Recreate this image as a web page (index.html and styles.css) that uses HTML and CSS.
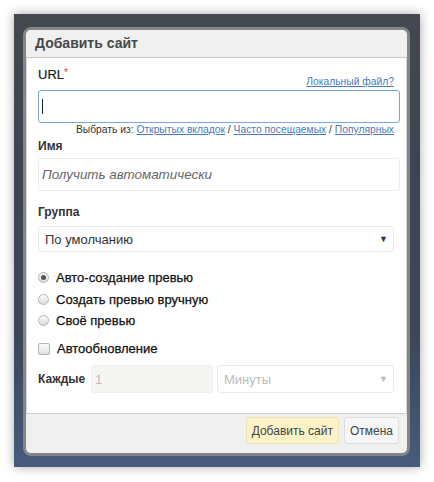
FILE: index.html
```html
<!DOCTYPE html>
<html lang="ru">
<head>
    <meta charset="UTF-8">
    <title>Добавить сайт</title>
    <link rel="stylesheet" href="styles.css">
</head>
<body>
    <div class="backdrop">
        <div class="dialog">
            <div class="dialog-head">Добавить сайт</div>

            <form class="dialog-body">
                <div class="url-row">
                    <label class="label-plain" for="url">URL<span class="req">*</span></label>
                    <a href="#" class="link local-link">Локальный файл?</a>
                </div>
                <div class="field url-field"><span class="caret"></span></div>
                <div class="pick-from">
                    Выбрать из: <a href="#" class="link">Открытых вкладок</a> / <a href="#" class="link">Часто посещаемых</a> / <a href="#" class="link">Популярных</a>
                </div>

                <div class="label name-label">Имя</div>
                <div class="field name-field">Получить автоматически</div>

                <div class="label group-label">Группа</div>
                <div class="field select">По умолчанию<span class="arrow">&#9660;</span></div>

                <div class="options">
                    <div class="option"><span class="radio checked"></span>Авто-создание превью</div>
                    <div class="option"><span class="radio"></span>Создать превью вручную</div>
                    <div class="option"><span class="radio"></span>Своё превью</div>
                </div>

                <div class="option auto-update"><span class="checkbox"></span>Автообновление</div>

                <div class="every-row">
                    <span class="label every-label">Каждые</span>
                    <div class="field every-num">1</div>
                    <div class="field select every-unit">Минуты<span class="arrow">&#9660;</span></div>
                </div>
            </form>

            <div class="dialog-foot">
                <button class="btn btn-primary">Добавить сайт</button>
                <button class="btn">Отмена</button>
            </div>
        </div>
    </div>
</body>
</html>
```

FILE: styles.css
```css
body {
  margin: 0;
  background: #fff;
  font-family: "Liberation Sans", Arial, sans-serif;
  color: #222;
}

/* dark page behind the popup */
.backdrop {
  margin: 14px;
  width: 406px;
  height: 453px;
  box-sizing: border-box;
  padding: 13px 0 0 9px;
  background: linear-gradient(180deg, #44484f 0%, #3d4553 30%, #3b4658 70%, #475b7c 100%);
  box-shadow: 0 0 10px rgba(0, 0, 0, 0.35);
}

.dialog {
  width: 387px;
  height: 429px;
  box-sizing: border-box;
  border: 3px solid #858585;
  border-radius: 8px;
  background: #fff;
  display: flex;
  flex-direction: column;
  overflow: hidden;
  box-shadow: inset 0 0 0 1px #d8d8d8;
}

.dialog-head {
  flex: none;
  height: 27px;
  line-height: 27px;
  padding-left: 9px;
  background: #f0f0f0;
  border-bottom: 1px solid #c8c8c8;
  font-weight: bold;
  font-size: 14px;
  color: #484848;
}

.dialog-body {
  flex: 1;
  padding: 6px 7px 0 12px;
  font-size: 13px;
}

.url-row {
  display: flex;
  justify-content: space-between;
  align-items: flex-end;
  height: 24px;
  margin-right: 6px;
}

.label-plain {
  font-size: 13px;
  color: #1a1a1a;
  align-self: flex-start;
  margin-top: 3px;
  -webkit-text-stroke: 0.2px #1a1a1a;
}

.req {
  color: #d33;
  font-size: 10px;
  vertical-align: top;
  -webkit-text-stroke: 0;
}

.link {
  color: #4a7bb7;
  text-decoration: underline;
}

.local-link {
  font-size: 10.3px;
  margin-bottom: 1px;
}

.field {
  box-sizing: border-box;
  border: 1px solid #ececec;
  border-radius: 3px;
  background: #fff;
  display: flex;
  align-items: center;
  padding-left: 3px;
}

.url-field {
  height: 33px;
  margin-top: 2px;
  border-color: #7ba4d9;
}

.caret {
  width: 1px;
  height: 15px;
  background: #222;
}

.pick-from {
  height: 13px;
  font-size: 10.3px;
  color: #333;
  text-align: right;
  margin-right: 6px;
  line-height: 13px;
}

.label {
  font-weight: bold;
  font-size: 12px;
  color: #333;
}

.name-label {
  height: 20px;
  line-height: 20px;
}

.name-field {
  height: 33px;
  margin-top: 2px;
  font-style: italic;
  font-size: 13.4px;
  color: #666;
}

.group-label {
  padding-top: 11px;
  height: 20px;
  line-height: 20px;
}

.select {
  height: 26px;
  margin: 4px 6px 0 0;
  justify-content: space-between;
  padding: 0 5px 0 6px;
  font-size: 13px;
  color: #333;
}

.arrow {
  font-size: 9px;
  color: #333;
}

.options {
  margin-top: 15px;
}

.option {
  display: flex;
  align-items: center;
  height: 21.5px;
  font-size: 13px;
  color: #111;
  -webkit-text-stroke: 0.25px #111;
}

.radio {
  width: 9px;
  height: 9px;
  border: 1px solid #b5b5b5;
  border-radius: 50%;
  background: linear-gradient(#fafafa, #dcdcdc);
  margin: 0 7px 0 0;
  position: relative;
}

.radio.checked::after {
  content: "";
  position: absolute;
  left: 2px;
  top: 2px;
  width: 5px;
  height: 5px;
  border-radius: 50%;
  background: #555;
}

.auto-update {
  margin-top: 6.5px;
}

.checkbox {
  width: 10px;
  height: 10px;
  border: 1px solid #b5b5b5;
  border-radius: 2px;
  background: linear-gradient(#fafafa, #e0e0e0);
  margin-right: 7px;
}

.every-row {
  display: flex;
  align-items: center;
  gap: 4px;
  margin: 5.5px 6px 0 0;
}

.every-label {
  width: 49px;
}

.every-num {
  width: 122px;
  height: 28px;
  background: #f5f5f3;
  border-color: #f0f0f0;
  color: #bbb;
  font-size: 13px;
}

.every-unit {
  flex: 1;
  height: 28px;
  margin: 0;
  color: #bbb;
}

.every-unit .arrow {
  color: #bbb;
}

.dialog-foot {
  flex: none;
  height: 36px;
  background: #f0f0f0;
  border-top: 1px solid #d0d0d0;
  display: flex;
  justify-content: flex-end;
  align-items: flex-start;
  gap: 5px;
  padding: 3px 8px 0 0;
}

.btn {
  height: 27px;
  padding: 0 5px;
  font-family: "Liberation Sans", Arial, sans-serif;
  font-size: 12px;
  color: #444;
  background: #f6f6f6;
  border: 1px solid #ddd;
  border-radius: 3px;
}

.btn-primary {
  background: #fbf2c8;
  border-color: #eee2b0;
}
```
